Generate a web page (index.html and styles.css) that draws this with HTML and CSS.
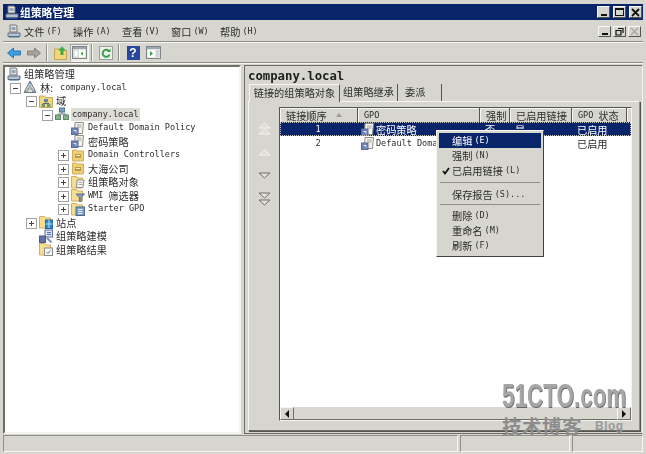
FILE: index.html
```html
<!DOCTYPE html>
<html lang="zh-CN">
<head>
<meta charset="utf-8">
<title>组策略管理</title>
<link rel="stylesheet" href="styles.css">
</head>
<body>
<svg class="defs" width="0" height="0" aria-hidden="true">
  <defs>
    <symbol id="i-console" viewBox="0 0 14 14">
      <path d="M3 1h6l1 1v6H3z" fill="#e6e2d6" stroke="#6f7480"/>
      <rect x="4.500" y="3" width="4" height="3" fill="#8fa3c4"/>
      <path d="M1 9h12v3.500H1z" fill="#b9c0cc" stroke="#5e6c8a"/>
      <path d="M2 13h10" stroke="#3d6f9e"/>
    </symbol>
    <symbol id="i-forest" viewBox="0 0 14 14">
      <path d="M7 1 13 12.500H1z" fill="#dfe3e6" stroke="#6e7378"/>
      <path d="M7 5 10 12M7 5 4 12M4 9h6" stroke="#8c97a0" fill="none"/>
      <circle cx="7" cy="3" r="1.300" fill="#7d93ad"/>
      <circle cx="3" cy="11.500" r="1.300" fill="#7ea77e"/>
      <circle cx="11" cy="11.500" r="1.300" fill="#7d93ad"/>
    </symbol>
    <symbol id="i-domains" viewBox="0 0 14 14">
      <path d="M0.500 2h5l1 1.500h7v10h-13z" fill="#f3d77e" stroke="#c8a850"/>
      <rect x="5" y="5" width="4" height="3" fill="#5f86a8"/>
      <rect x="2.500" y="10" width="3.500" height="3" fill="#6f9a78"/>
      <rect x="8" y="10" width="3.500" height="3" fill="#6f9a78"/>
      <path d="M7 8v1.500M4 10V9.500h6v.5" stroke="#5a6a70" fill="none"/>
    </symbol>
    <symbol id="i-domain" viewBox="0 0 14 14">
      <rect x="4.500" y="1" width="5" height="4" fill="#7da0bd" stroke="#4e7691"/>
      <rect x="0.500" y="8" width="5" height="4.500" fill="#86b08c" stroke="#5d8a66"/>
      <rect x="8.500" y="8" width="5" height="4.500" fill="#86b08c" stroke="#5d8a66"/>
      <path d="M7 5v2M3 8V7h8v1" stroke="#72808a" fill="none"/>
    </symbol>
    <symbol id="i-gpo" viewBox="0 0 14 14">
      <path d="M4 1.500h8.500l-1 11H3.500z" fill="#f4f2ea" stroke="#8d8d86"/>
      <path d="M6 4h4.500M6 6h4.500" stroke="#a2a29a"/>
      <rect x="0.500" y="7" width="6.500" height="6.500" fill="#6f82b4" stroke="#5a6c9c"/>
      <path d="M2.500 9.500h2.500v2" stroke="#dfe6f5" fill="none"/>
    </symbol>
    <symbol id="i-ou" viewBox="0 0 14 14">
      <path d="M1.500 2h4l1 1h6v10h-11z" fill="#efcf72" stroke="#cfb060"/>
      <rect x="4" y="6" width="6" height="4" fill="#b39a48"/>
      <path d="M5 7.500h4" stroke="#f8efc8"/>
    </symbol>
    <symbol id="i-gpos" viewBox="0 0 14 14">
      <path d="M0.500 1.500h5l1 1.500h5v10h-11z" fill="#f5de92" stroke="#cfb060"/>
      <path d="M6 5h7l-1 7.500H5.500z" fill="#f6f5f0" stroke="#8c8c86"/>
      <path d="M7.500 7.500h4M7.500 9.500h4" stroke="#a8a8a0"/>
    </symbol>
    <symbol id="i-wmi" viewBox="0 0 14 14">
      <path d="M0.500 1.500h5l1 1.500h5v10h-11z" fill="#f5de92" stroke="#cfb060"/>
      <path d="M5 6h8.500l-3.300 3.500V13.500H8.300V9.500z" fill="#8b9fb8" stroke="#5c7088"/>
    </symbol>
    <symbol id="i-starter" viewBox="0 0 14 14">
      <path d="M0.500 1.500h5l1 1.500h5v10h-11z" fill="#f5de92" stroke="#cfb060"/>
      <rect x="5" y="5" width="8.500" height="8.500" fill="#7b9cc4" stroke="#4a6a98"/>
      <path d="M7 7.500h4.500M7 9.500h4.500M7 11.500h4.500" stroke="#e6eef8"/>
    </symbol>
    <symbol id="i-sites" viewBox="0 0 14 14">
      <path d="M0.500 1.500h5l1 1.500h5v10h-11z" fill="#f5de92" stroke="#cfb060"/>
      <rect x="6.500" y="5" width="7" height="8.500" fill="#2f86c8" stroke="#2169a4"/>
      <path d="M6.500 9h7M10 5v8" stroke="#bfe0f5"/>
    </symbol>
    <symbol id="i-model" viewBox="0 0 14 14">
      <rect x="6" y="1" width="7.500" height="7" fill="#dfe5f0" stroke="#5a6c9c"/>
      <path d="M8 3.500h4M8 5.500h4" stroke="#4f68a8"/>
      <rect x="0.500" y="7" width="6" height="6.500" fill="#5e72a8" stroke="#46588c"/>
      <path d="M8 9l4.500 4.500" stroke="#7d90b8" stroke-width="2"/>
    </symbol>
    <symbol id="i-result" viewBox="0 0 14 14">
      <path d="M0.500 1.500h5l1 1.500h5v10h-11z" fill="#f5de92" stroke="#cfb060"/>
      <rect x="5.500" y="6" width="8" height="7.500" fill="#f6f6f2" stroke="#8c8c86"/>
      <path d="M7.500 10l1.500 1.500 2.500-3" stroke="#4f7fb0" fill="none"/>
    </symbol>
  </defs>
</svg>

<div class="window">
  <header class="titlebar">
    <svg class="ico"><use href="#i-console"/></svg>
    <span class="title-text cn">组策略管理</span>
    <div class="win-btns">
      <span class="wbtn"><i class="g-min"></i></span>
      <span class="wbtn"><i class="g-max"></i></span>
      <span class="wbtn wbtn-close"><svg width="9" height="9" viewBox="0 0 9 9"><path d="M1 1l7 7M8 1l-7 7" stroke="#111" stroke-width="1.800"/></svg></span>
    </div>
  </header>

  <nav class="menubar">
    <svg class="ico menu-ico"><use href="#i-console"/></svg>
    <span class="menu-item"><span class="cn">文件</span><span class="en">(F)</span></span>
    <span class="menu-item"><span class="cn">操作</span><span class="en">(A)</span></span>
    <span class="menu-item"><span class="cn">查看</span><span class="en">(V)</span></span>
    <span class="menu-item"><span class="cn">窗口</span><span class="en">(W)</span></span>
    <span class="menu-item"><span class="cn">帮助</span><span class="en">(H)</span></span>
    <div class="mdi-btns">
      <span class="mbtn"><i class="g-min"></i></span>
      <span class="mbtn"><svg width="9" height="9" viewBox="0 0 9 9"><path d="M3 1.500h5v4.500M1 3.500h5v4.500H1z" fill="none" stroke="#111" stroke-width="1.200"/></svg></span>
      <span class="mbtn mbtn-off"><svg width="9" height="9" viewBox="0 0 9 9"><path d="M1 1l7 7M8 1l-7 7" stroke="#a9a89f" stroke-width="1.300"/></svg></span>
    </div>
  </nav>

  <div class="toolbar">
    <span class="tool"><svg width="14" height="12" viewBox="0 0 14 12"><path d="M0.500 6 6.500 1v3h7v4h-7v3z" fill="#3f9ee0" stroke="#2b79b8"/></svg></span>
    <span class="tool"><svg width="14" height="12" viewBox="0 0 14 12"><path d="M13.500 6 7.500 1v3h-7v4h7v3z" fill="#a3a39c" stroke="#85857e"/></svg></span>
    <span class="tool-sep"></span>
    <span class="tool"><svg width="14" height="14" viewBox="0 0 14 14"><path d="M0.500 3h5l1 1.500h6v9h-12z" fill="#f2d67e" stroke="#c4a550"/><path d="M8 0.500 12 4.500H9.500V9H6.500V4.500H4z" fill="#3dab4a"/></svg></span>
    <span class="tool tool-on"><svg width="15" height="13" viewBox="0 0 15 13"><rect x="0.500" y="0.500" width="14" height="12" fill="#e8e8e0" stroke="#7f8487"/><rect x="1" y="1" width="13" height="2" fill="#9aa7b5"/><rect x="2" y="4" width="4" height="7" fill="#fff" stroke="#a3a7a5" stroke-width=".5"/><rect x="7" y="4" width="6" height="7" fill="#fff"/><path d="M11 5.500v4L8.500 7.500z" fill="#39a048"/></svg></span>
    <span class="tool-sep"></span>
    <span class="tool"><svg width="14" height="14" viewBox="0 0 14 14"><rect x="0.500" y="0.500" width="13" height="13" fill="#eef0ea" stroke="#9aa0a0"/><path d="M10.500 8.500a3.500 3.500 0 1 1-.8-3.600" fill="none" stroke="#36a24a" stroke-width="2"/><path d="M11.500 2.500v3.500H8z" fill="#36a24a"/></svg></span>
    <span class="tool-sep"></span>
    <span class="tool tool-help"><span class="help-q">?</span></span>
    <span class="tool"><svg width="15" height="13" viewBox="0 0 15 13"><rect x="0.500" y="0.500" width="14" height="12" fill="#e8e8e0" stroke="#7f8487"/><rect x="1" y="1" width="13" height="2" fill="#9aa7b5"/><rect x="2" y="4" width="7" height="7" fill="#fff"/><path d="M4 5v5l3-2.500z" fill="#39a048"/><rect x="10" y="4" width="3.500" height="7" fill="#cfd3d6"/></svg></span>
  </div>

  <main class="panes">
    <aside class="tree">
      <div class="node n0"><svg class="ico"><use href="#i-console"/></svg><span class="cn">组策略管理</span></div>
      <div class="node n1"><span class="tw tw-open"></span><svg class="ico"><use href="#i-forest"/></svg><span class="cn">林:</span><span class="en en-sp">company.local</span></div>
      <div class="node n2"><span class="tw tw-open"></span><svg class="ico"><use href="#i-domains"/></svg><span class="cn">域</span></div>
      <div class="node n3"><span class="tw tw-open"></span><svg class="ico"><use href="#i-domain"/></svg><span class="en node-sel">company.local</span></div>
      <div class="node n4"><span class="tw"></span><svg class="ico"><use href="#i-gpo"/></svg><span class="en">Default Domain Policy</span></div>
      <div class="node n4"><span class="tw"></span><svg class="ico"><use href="#i-gpo"/></svg><span class="cn">密码策略</span></div>
      <div class="node n4"><span class="tw tw-closed"></span><svg class="ico"><use href="#i-ou"/></svg><span class="en">Domain Controllers</span></div>
      <div class="node n4"><span class="tw tw-closed"></span><svg class="ico"><use href="#i-ou"/></svg><span class="cn">大海公司</span></div>
      <div class="node n4"><span class="tw tw-closed"></span><svg class="ico"><use href="#i-gpos"/></svg><span class="cn">组策略对象</span></div>
      <div class="node n4"><span class="tw tw-closed"></span><svg class="ico"><use href="#i-wmi"/></svg><span class="en">WMI</span><span class="cn cn-sp">筛选器</span></div>
      <div class="node n4"><span class="tw tw-closed"></span><svg class="ico"><use href="#i-starter"/></svg><span class="en">Starter GPO</span></div>
      <div class="node n2"><span class="tw tw-closed"></span><svg class="ico"><use href="#i-sites"/></svg><span class="cn">站点</span></div>
      <div class="node n2"><span class="tw"></span><svg class="ico"><use href="#i-model"/></svg><span class="cn">组策略建模</span></div>
      <div class="node n2"><span class="tw"></span><svg class="ico"><use href="#i-result"/></svg><span class="cn">组策略结果</span></div>
    </aside>

    <section class="detail">
      <h1 class="detail-title">company.local</h1>
      <div class="tabs">
        <span class="tab tab-on cn">链接的组策略对象</span>
        <span class="tab tab-b cn">组策略继承</span>
        <span class="tab tab-c cn">委派</span>
      </div>
      <div class="tab-panel">
        <div class="movers">
          <svg class="mv" width="15" height="14" viewBox="0 0 15 14"><path d="M7.500 1 13 6H2zM7.500 7 13 12H2z" fill="#dedcd4" stroke="#f4f3ee"/></svg>
          <svg class="mv" width="15" height="10" viewBox="0 0 15 10"><path d="M7.500 2 13 7H2z" fill="#dedcd4" stroke="#f4f3ee"/></svg>
          <svg class="mv" width="15" height="10" viewBox="0 0 15 10"><path d="M7.500 8 13 3H2z" fill="#e2e1da" stroke="#6f6f6a"/></svg>
          <svg class="mv" width="15" height="14" viewBox="0 0 15 14"><path d="M7.500 6 13 1H2zM7.500 13 13 8H2z" fill="#e2e1da" stroke="#6f6f6a"/></svg>
        </div>
        <div class="list">
          <div class="list-head">
            <span class="hd c-order cn">链接顺序<i class="sort"></i></span>
            <span class="hd c-gpo en">GPO</span>
            <span class="hd c-enf cn">强制</span>
            <span class="hd c-link cn">已启用链接</span>
            <span class="hd c-state"><span class="en">GPO</span><span class="cn cn-sp">状态</span></span>
            <span class="hd c-rest"></span>
          </div>
          <div class="list-row row-sel">
            <span class="c-order cell-center en">1</span>
            <span class="c-gpo cell-gpo"><svg class="ico"><use href="#i-gpo"/></svg><span class="cn">密码策略</span></span>
            <span class="c-enf cn cell-pad">否</span>
            <span class="c-link cn cell-pad">是</span>
            <span class="c-state cn cell-pad">已启用</span>
          </div>
          <div class="list-row">
            <span class="c-order cell-center en">2</span>
            <span class="c-gpo cell-gpo"><svg class="ico"><use href="#i-gpo"/></svg><span class="en">Default Domain Policy</span></span>
            <span class="c-enf cn cell-pad">否</span>
            <span class="c-link cn cell-pad">是</span>
            <span class="c-state cn cell-pad">已启用</span>
          </div>
          <div class="list-fill"></div>
          <div class="hscroll">
            <span class="sb-btn"><i class="arrow-l"></i></span>
            <span class="sb-track"></span>
            <span class="sb-btn"><i class="arrow-r"></i></span>
          </div>
        </div>
      </div>
    </section>
  </main>

  <footer class="status">
    <span class="st st-a"></span>
    <span class="st st-b"></span>
    <span class="st st-c"></span>
  </footer>
</div>

<div class="ctx">
  <div class="ctx-item ctx-hot"><span class="cn">编辑</span><span class="en">(E)</span></div>
  <div class="ctx-item"><span class="cn">强制</span><span class="en">(N)</span></div>
  <div class="ctx-item"><svg class="check" width="8" height="8" viewBox="0 0 8 8"><path d="M1 4l2 2.500L7 1" fill="none" stroke="#111" stroke-width="1.800"/></svg><span class="cn">已启用链接</span><span class="en">(L)</span></div>
  <div class="ctx-sep"></div>
  <div class="ctx-item"><span class="cn">保存报告</span><span class="en">(S)...</span></div>
  <div class="ctx-sep ctx-sep-b"></div>
  <div class="ctx-item"><span class="cn">删除</span><span class="en">(D)</span></div>
  <div class="ctx-item"><span class="cn">重命名</span><span class="en">(M)</span></div>
  <div class="ctx-item"><span class="cn">刷新</span><span class="en">(F)</span></div>
</div>

<div class="watermark">
  <div class="wm-big">51CTO.com</div>
  <div class="wm-line"><span class="wm-cn">技术博客</span><span class="wm-blog">Blog</span></div>
</div>
</body>
</html>
```

FILE: styles.css
```css
* { box-sizing: border-box; }
html, body { margin: 0; padding: 0; }
body {
  width: 646px;
  height: 454px;
  overflow: hidden;
  background: #d7d6ce;
  color: #2c2c2c;
  font-family: "Noto Sans CJK SC", sans-serif;
}
.defs { position: absolute; }
.cn { font-family: "Noto Sans CJK SC", sans-serif; font-size: 10.2px; line-height: 13px; white-space: nowrap; }
.en { font-family: "DejaVu Sans Mono", monospace; font-size: 8.5px; line-height: 13px; white-space: nowrap; }
.en-sp { margin-left: 7px; }
.cn-sp { margin-left: 5px; }
.ico { width: 14px; height: 14px; flex: none; display: block; }

.window {
  height: 454px;
  padding: 4px 3px 2px;
  display: flex;
  flex-direction: column;
  background: #d7d6ce;
  filter: blur(0.35px);
}
.titlebar {
  height: 16px;
  flex: none;
  background: #0a246a;
  color: #fff;
  display: flex;
  align-items: center;
  padding: 0 1px 0 2px;
}
.title-text { margin-left: 1px; font-weight: 700; color: #fff; font-size: 10.8px; }
.win-btns { margin-left: auto; display: flex; gap: 3px; }
.wbtn, .mbtn {
  width: 13px;
  height: 12px;
  background: #d7d6ce;
  border: 1px solid;
  border-color: #f7f7f2 #55554f #55554f #f7f7f2;
  display: flex;
  align-items: center;
  justify-content: center;
  position: relative;
}
.g-min { width: 6px; height: 2px; background: #111; align-self: flex-end; margin-bottom: 1px; }
.g-max { width: 9px; height: 8px; border: 1px solid #111; border-top-width: 2px; }
.menubar {
  height: 21px;
  flex: none;
  margin-top: 1px;
  display: flex;
  align-items: center;
  padding-left: 4px;
  border-bottom: 1px solid #8f8e87;
  box-shadow: 0 1px 0 #f6f6f1;
}
.menu-ico { margin-right: 3px; }
.menu-item { width: 49px; display: flex; gap: 2px; align-items: center; flex: none; }
.mdi-btns { margin-left: auto; display: flex; gap: 2px; margin-right: 2px; }
.mbtn { height: 11px; width: 13px; }
.toolbar {
  height: 20px;
  flex: none;
  margin-top: 1px;
  display: flex;
  align-items: center;
  padding-left: 1px;
  border-bottom: 1px solid #8f8e87;
  box-shadow: 0 1px 0 #f6f6f1;
}
.tool { width: 20px; height: 18px; display: flex; align-items: center; justify-content: center; flex: none; }
.tool-on { background: #eeeee9; border: 1px solid; border-color: #a5a49d #f7f7f2 #f7f7f2 #a5a49d; width: 19px; margin-left: -1px; }
.tool-sep { width: 2px; height: 17px; margin: 0 3px 0 2px; border-left: 1px solid #8f8e87; border-right: 1px solid #f6f6f1; flex: none; }
.tool-help .help-q {
  width: 13px;
  height: 14px;
  background: #27479b;
  color: #fff;
  text-align: center;
  font: 700 12px/14px "Liberation Sans", sans-serif;
}
.panes {
  flex: 1;
  min-height: 0;
  margin-top: 2px;
  display: flex;
  gap: 3px;
}
.tree {
  width: 238px;
  flex: none;
  background: #fff;
  border: 2px solid;
  border-color: #6e6d67 #f2f2ee #f2f2ee #6e6d67;
  padding: 0 0 0 2px;
  overflow: hidden;
}
.node { height: 13.5px; display: flex; align-items: center; }
.node .ico { margin-right: 3px; }
.n2 { padding-left: 16px; }
.n3 { padding-left: 32px; }
.n4 { padding-left: 48px; }
.tw {
  width: 16px;
  flex: none;
  display: block;
  height: 9px;
  position: relative;
}
.tw-open::before, .tw-closed::before {
  content: "";
  position: absolute;
  left: 3px;
  top: 0;
  width: 9px;
  height: 9px;
  border: 1px solid #a2a2a2;
  background:
    linear-gradient(#444, #444) center / 5px 1px no-repeat,
    #fff;
}
.tw-closed::before {
  background:
    linear-gradient(#444, #444) center / 5px 1px no-repeat,
    linear-gradient(#444, #444) center / 1px 5px no-repeat,
    #fff;
}
.node-sel { background: #dedcd6; padding: 0 1px; margin-left: -1px; }

.detail {
  flex: 1;
  min-width: 0;
  display: flex;
  flex-direction: column;
  border: 1px solid;
  border-color: #6e6d67 #f2f2ee #6e6d67 #6e6d67;
  padding: 3px 2px 2px 3px;
}
.detail-title { margin: 0; font: 700 12.300px/14px "DejaVu Sans Mono", monospace; color: #1c1c1c; height: 15px; }
.tabs { display: flex; height: 17px; flex: none; padding-left: 1px; }
.tab {
  height: 17px;
  padding: 1px 3px 0;
  border-right: 1px solid #55554f;
  background: #d7d6ce;
  flex: none;
  text-align: center;
}
.tab-on {
  border-top: 1px solid #f6f6f1;
  border-left: 1px solid #f6f6f1;
  height: 18px;
  width: 91px;
  position: relative;
  z-index: 1;
  margin-bottom: -1px;
}
.tab-b { width: 58px; }
.tab-c { width: 44px; padding-left: 7px; text-align: left; }
.tab-panel {
  flex: 1;
  min-height: 0;
  display: flex;
  border: 1px solid;
  border-color: #f6f6f1 #8f8e87 #6e6d67 #f6f6f1;
  padding: 5px 7px 9px 0;
  box-shadow: 1px 1px 0 #55554f;
}
.movers {
  width: 30px;
  flex: none;
  display: flex;
  flex-direction: column;
  align-items: center;
  padding-top: 15px;
}
.mv { display: block; margin-bottom: 12px; }
.list {
  flex: 1;
  min-width: 0;
  background: #fff;
  border: 1px solid;
  border-color: #55554f #f2f2ee #f2f2ee #55554f;
  display: flex;
  flex-direction: column;
}
.list-head { display: flex; height: 14px; flex: none; background: #d7d6ce; }
.hd {
  height: 14px;
  border-right: 1px solid #55554f;
  box-shadow: inset 1px 1px 0 #f6f6f1;
  display: flex;
  align-items: center;
  padding-left: 6px;
}
.c-order { width: 78px; flex: none; }
.c-gpo { width: 122px; flex: none; }
.c-enf { width: 30px; flex: none; }
.c-link { width: 62px; flex: none; }
.c-state { width: 55px; flex: none; }
.c-rest { flex: 1; padding: 0; border: 0; }
.sort {
  margin-left: 9px;
  width: 0;
  height: 0;
  border-left: 3px solid transparent;
  border-right: 3px solid transparent;
  border-bottom: 4px solid #9c9b94;
}
.list-row { height: 14px; flex: none; display: flex; align-items: center; }
.row-sel { background: #0a246a; color: #fff; outline: 1px dotted #c9c9c0; outline-offset: -1px; }
.row-sel .cn, .row-sel .en { color: #fff; }
.cell-center { text-align: center; padding-right: 2px; }
.cell-gpo { display: flex; align-items: center; gap: 1px; padding-left: 3px; overflow: hidden; }
.cell-pad { padding-left: 5px; }
.list-fill { flex: 1; min-height: 0; }
.hscroll { height: 13px; flex: none; display: flex; background: #e9e8e3; }
.sb-btn {
  width: 14px;
  background: #d7d6ce;
  border: 1px solid;
  border-color: #f6f6f1 #6e6d67 #6e6d67 #f6f6f1;
  display: flex;
  align-items: center;
  justify-content: center;
  flex: none;
}
.sb-track { flex: 1; background: #d9d8d0; border-bottom: 1px solid #6e6d67; }
.arrow-l { border: 4px solid transparent; border-left-width: 0; border-right-color: #111; }
.arrow-r { border: 4px solid transparent; border-right-width: 0; border-left-color: #111; }

.status { height: 17px; flex: none; margin-top: 1px; display: flex; gap: 2px; }
.st { border: 1px solid; border-color: #8f8e87 #f6f6f1 #f6f6f1 #8f8e87; display: block; }
.st-a { width: 455px; }
.st-b { width: 110px; }
.st-c { flex: 1; }

.ctx {
  position: absolute;
  left: 436px;
  top: 130px;
  width: 108px;
  height: 127px;
  background: #d7d6ce;
  border: 1px solid;
  border-color: #f6f6f1 #404040 #404040 #f6f6f1;
  padding: 2px;
  filter: blur(0.35px);
}
.ctx-item {
  height: 15px;
  padding-left: 13px;
  display: flex;
  align-items: center;
  gap: 2px;
  position: relative;
}
.ctx-hot { background: #0a246a; }
.ctx-hot .cn, .ctx-hot .en { color: #fff; }
.check { position: absolute; left: 3px; top: 4px; }
.ctx-sep { height: 9px; margin: 0 1px; background: linear-gradient(#8f8e87, #8f8e87) 0 4px / 100% 1px no-repeat; }
.ctx-sep-b { height: 6px; background-position: 0 2px; }

.watermark {
  position: absolute;
  left: 502px;
  top: 378px;
  width: 130px;
  pointer-events: none;
}
.wm-big {
  font: 700 34px/34px "Liberation Sans", sans-serif;
  color: #a6a6a6;
  text-shadow: 1px 1px 0 #666;
  transform: scaleX(0.66);
  transform-origin: left top;
  white-space: nowrap;
}
.wm-line { display: flex; align-items: center; margin-top: 3px; }
.wm-cn { font: 700 19.500px/22px "Noto Sans CJK SC", sans-serif; color: #8c8c8c; letter-spacing: 0.500px; white-space: nowrap; }
.wm-blog { font: 700 12px/14px "Liberation Sans", sans-serif; color: #9a9a9a; margin-left: 13px; letter-spacing: 0.500px; }
```
